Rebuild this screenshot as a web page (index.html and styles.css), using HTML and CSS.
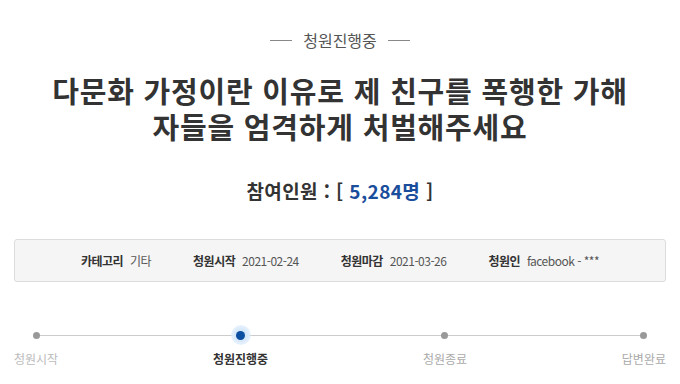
FILE: index.html
```html
<!DOCTYPE html>
<html lang="ko">
<head>
    <meta charset="UTF-8">
    <meta name="viewport" content="width=device-width, initial-scale=1.0">
    <title>청원진행중</title>
    <link rel="stylesheet" href="styles.css">
</head>
<body>
    <div class="petition">
        <div class="status"><span>청원진행중</span></div>
        <h1 class="title">다문화 가정이란 이유로 제 친구를 폭행한 가해<br>자들을 엄격하게 처벌해주세요</h1>
        <h2 class="count">참여인원 : [ <span class="num">5,284명</span> ]</h2>

        <ul class="info">
            <li><b>카테고리</b> 기타</li>
            <li><b>청원시작</b> 2021-02-24</li>
            <li><b>청원마감</b> 2021-03-26</li>
            <li><b>청원인</b> facebook - ***</li>
        </ul>

        <div class="steps">
            <div class="step">
                <span class="dot"></span>
                <span class="label">청원시작</span>
            </div>
            <div class="step active">
                <span class="dot"></span>
                <span class="label">청원진행중</span>
            </div>
            <div class="step">
                <span class="dot"></span>
                <span class="label">청원종료</span>
            </div>
            <div class="step">
                <span class="dot"></span>
                <span class="label">답변완료</span>
            </div>
        </div>
    </div>
</body>
</html>
```

FILE: styles.css
```css
body {
    margin: 0;
    background: #fff;
    font-family: "Noto Sans CJK KR", "Noto Sans", sans-serif;
    color: #333;
}
.petition {
    padding: 29px 14px 0;
}
.status {
    display: flex;
    justify-content: center;
    align-items: center;
    gap: 11px;
    font-size: 16px;
    line-height: 22px;
    color: #555;
}
.status::before,
.status::after {
    content: '';
    width: 22px;
    height: 1px;
    background: #888;
}
.title {
    margin: 21px 0 0;
    text-align: center;
    font-size: 29px;
    line-height: 36px;
    font-weight: bold;
    letter-spacing: 0.8px;
    color: #333;
}
.count {
    margin: 33px 0 0;
    text-align: center;
    font-size: 19px;
    line-height: 28px;
    font-weight: bold;
    letter-spacing: 0.4px;
    color: #333;
}
.count .num {
    color: #1a4d9c;
}
.info {
    list-style: none;
    margin: 34px 0 0;
    padding: 0;
    height: 41px;
    display: flex;
    justify-content: center;
    align-items: center;
    gap: 42px;
    background: #f5f5f5;
    border: 1px solid #dcdcdc;
    border-radius: 3px;
    font-size: 12px;
    color: #555;
    letter-spacing: -0.5px;
}
.info b {
    color: #333;
    margin-right: 4px;
}
.steps {
    position: relative;
    margin-top: 43px;
    display: flex;
    justify-content: space-between;
}
.steps::before {
    content: '';
    position: absolute;
    top: 10px;
    left: 22px;
    right: 22px;
    height: 1px;
    background: #ccc;
}
.step {
    display: flex;
    flex-direction: column;
    align-items: center;
    gap: 5px;
}
.dot {
    position: relative;
    width: 20px;
    height: 20px;
    display: flex;
    justify-content: center;
    align-items: center;
}
.dot::after {
    content: '';
    width: 7px;
    height: 7px;
    border-radius: 50%;
    background: #999;
}
.step.active .dot {
    border-radius: 50%;
    background: radial-gradient(circle, #c7e0fb 0%, #dcebfc 50%, rgba(230, 241, 253, 0) 100%);
}
.step.active .dot::after {
    width: 9px;
    height: 9px;
    background: #0b4ea2;
}
.label {
    font-size: 12px;
    line-height: 18px;
    color: #aaa;
}
.step:first-child .label {
    color: #bbb;
}
.step.active .label {
    color: #333;
    font-weight: bold;
}
```
